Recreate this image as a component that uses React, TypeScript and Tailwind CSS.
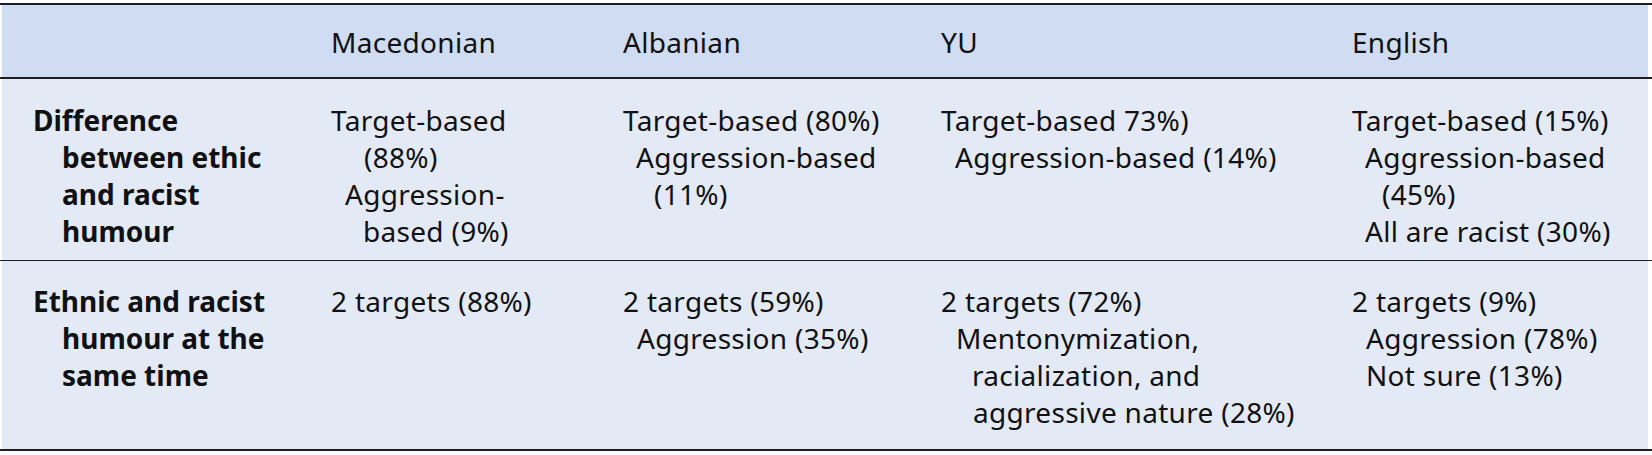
import React from "react";

type Line = { t: string; i: number };

const header = ["", "Macedonian", "Albanian", "YU", "English"];

const rows: { stub: Line[]; cells: Line[][]; cls: string }[] = [
  {
    cls: "pt-[23px] pb-[10px]",
    stub: [
      { t: "Difference", i: 0 },
      { t: "between ethic", i: 29 },
      { t: "and racist", i: 29 },
      { t: "humour", i: 29 },
    ],
    cells: [
      [
        { t: "Target-based", i: 0 },
        { t: "(88%)", i: 33 },
        { t: "Aggression-", i: 14 },
        { t: "based (9%)", i: 32 },
      ],
      [
        { t: "Target-based (80%)", i: 0 },
        { t: "Aggression-based", i: 13 },
        { t: "(11%)", i: 31 },
      ],
      [
        { t: "Target-based 73%)", i: 0 },
        { t: "Aggression-based (14%)", i: 14 },
      ],
      [
        { t: "Target-based (15%)", i: 0 },
        { t: "Aggression-based", i: 13 },
        { t: "(45%)", i: 30 },
        { t: "All are racist (30%)", i: 13 },
      ],
    ],
  },
  {
    cls: "pt-[22px] pb-[18px]",
    stub: [
      { t: "Ethnic and racist", i: 0 },
      { t: "humour at the", i: 29 },
      { t: "same time", i: 29 },
    ],
    cells: [
      [{ t: "2 targets (88%)", i: 0 }],
      [
        { t: "2 targets (59%)", i: 0 },
        { t: "Aggression (35%)", i: 14 },
      ],
      [
        { t: "2 targets (72%)", i: 0 },
        { t: "Mentonymization,", i: 15 },
        { t: "racialization, and", i: 31 },
        { t: "aggressive nature (28%)", i: 32 },
      ],
      [
        { t: "2 targets (9%)", i: 0 },
        { t: "Aggression (78%)", i: 14 },
        { t: "Not sure (13%)", i: 14 },
      ],
    ],
  },
];

function Lines({ lines, bold }: { lines: Line[]; bold?: boolean }) {
  return (
    <div className={bold ? "font-bold tracking-normal" : "font-normal"}>
      {lines.map((l, k) => (
        <div key={k} className="whitespace-nowrap" style={{ paddingLeft: l.i }}>
          {l.t}
        </div>
      ))}
    </div>
  );
}

const grid = "grid grid-cols-[329px_292px_318px_411px_1fr]";

export default function App() {
  return (
    <div
      className="w-[1652px] h-[455px] bg-white pt-[3px] text-[28px] leading-[37px] tracking-[0.3px] text-[#111]"
      style={{ fontFamily: '"Noto Sans", "Open Sans", sans-serif' }}
    >
      <div className="h-[2px] bg-[#1e1e1e]" />
      <div className={`${grid} h-[72px] pt-[19px] ml-[2px] mr-[4px] bg-[#cfdcf1]`}>
        {header.map((h, k) => (
          <div key={k} className={k === 0 ? "pl-[31px]" : ""}>
            {h}
          </div>
        ))}
      </div>
      <div className="h-[2px] bg-[#1e1e1e]" />
      {rows.map((r, ri) => (
        <React.Fragment key={ri}>
          <div className={`${grid} ${r.cls} ml-[2px] mr-[4px] bg-[#e3eaf6]`}>
            <div className="pl-[31px]">
              <Lines lines={r.stub} bold />
            </div>
            {r.cells.map((c, ci) => (
              <div key={ci}>
                <Lines lines={c} />
              </div>
            ))}
          </div>
          <div className={ri === rows.length - 1 ? "h-[2px] bg-[#1e1e1e]" : "h-px bg-[#1e1e1e]"} />
        </React.Fragment>
      ))}
    </div>
  );
}
